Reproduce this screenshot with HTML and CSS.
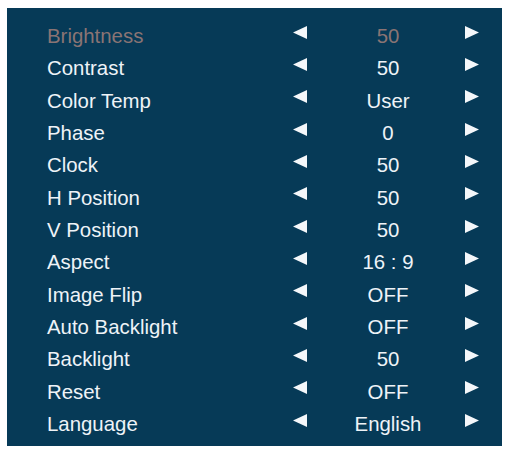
FILE: index.html
```html
<!DOCTYPE html>
<html>
<head>
<meta charset="utf-8">
<link rel="stylesheet" href="styles.css">
</head>
<body>
<div class="osd">
  <div class="row dim"><span class="label">Brightness</span><svg class="arr" viewBox="0 0 14 13"><polygon points="0,6.5 14,0 14,13"/></svg><span class="value">50</span><svg class="arr" viewBox="0 0 14 13"><polygon points="0,0 14,6.5 0,13"/></svg></div>
  <div class="row"><span class="label">Contrast</span><svg class="arr" viewBox="0 0 14 13"><polygon points="0,6.5 14,0 14,13"/></svg><span class="value">50</span><svg class="arr" viewBox="0 0 14 13"><polygon points="0,0 14,6.5 0,13"/></svg></div>
  <div class="row"><span class="label">Color Temp</span><svg class="arr" viewBox="0 0 14 13"><polygon points="0,6.5 14,0 14,13"/></svg><span class="value">User</span><svg class="arr" viewBox="0 0 14 13"><polygon points="0,0 14,6.5 0,13"/></svg></div>
  <div class="row"><span class="label">Phase</span><svg class="arr" viewBox="0 0 14 13"><polygon points="0,6.5 14,0 14,13"/></svg><span class="value">0</span><svg class="arr" viewBox="0 0 14 13"><polygon points="0,0 14,6.5 0,13"/></svg></div>
  <div class="row"><span class="label">Clock</span><svg class="arr" viewBox="0 0 14 13"><polygon points="0,6.5 14,0 14,13"/></svg><span class="value">50</span><svg class="arr" viewBox="0 0 14 13"><polygon points="0,0 14,6.5 0,13"/></svg></div>
  <div class="row"><span class="label">H Position</span><svg class="arr" viewBox="0 0 14 13"><polygon points="0,6.5 14,0 14,13"/></svg><span class="value">50</span><svg class="arr" viewBox="0 0 14 13"><polygon points="0,0 14,6.5 0,13"/></svg></div>
  <div class="row"><span class="label">V Position</span><svg class="arr" viewBox="0 0 14 13"><polygon points="0,6.5 14,0 14,13"/></svg><span class="value">50</span><svg class="arr" viewBox="0 0 14 13"><polygon points="0,0 14,6.5 0,13"/></svg></div>
  <div class="row"><span class="label">Aspect</span><svg class="arr" viewBox="0 0 14 13"><polygon points="0,6.5 14,0 14,13"/></svg><span class="value">16 : 9</span><svg class="arr" viewBox="0 0 14 13"><polygon points="0,0 14,6.5 0,13"/></svg></div>
  <div class="row"><span class="label">Image Flip</span><svg class="arr" viewBox="0 0 14 13"><polygon points="0,6.5 14,0 14,13"/></svg><span class="value">OFF</span><svg class="arr" viewBox="0 0 14 13"><polygon points="0,0 14,6.5 0,13"/></svg></div>
  <div class="row"><span class="label">Auto Backlight</span><svg class="arr" viewBox="0 0 14 13"><polygon points="0,6.5 14,0 14,13"/></svg><span class="value">OFF</span><svg class="arr" viewBox="0 0 14 13"><polygon points="0,0 14,6.5 0,13"/></svg></div>
  <div class="row"><span class="label">Backlight</span><svg class="arr" viewBox="0 0 14 13"><polygon points="0,6.5 14,0 14,13"/></svg><span class="value">50</span><svg class="arr" viewBox="0 0 14 13"><polygon points="0,0 14,6.5 0,13"/></svg></div>
  <div class="row"><span class="label">Reset</span><svg class="arr" viewBox="0 0 14 13"><polygon points="0,6.5 14,0 14,13"/></svg><span class="value">OFF</span><svg class="arr" viewBox="0 0 14 13"><polygon points="0,0 14,6.5 0,13"/></svg></div>
  <div class="row"><span class="label">Language</span><svg class="arr" viewBox="0 0 14 13"><polygon points="0,6.5 14,0 14,13"/></svg><span class="value">English</span><svg class="arr" viewBox="0 0 14 13"><polygon points="0,0 14,6.5 0,13"/></svg></div>
</div>
</body>
</html>
```

FILE: styles.css
```css
html, body {
  background: #ffffff;
}
body {
  margin: 8px 7px 9px 7px;
}
.osd {
  width: 495px;
  height: 438px;
  box-sizing: border-box;
  background: #063a57;
  padding: 12px 23px 6px 40px;
  font-family: "Liberation Sans", Arial, sans-serif;
  font-size: 20.4px;
  color: #eef3f7;
}
.row {
  display: grid;
  grid-template-columns: 246px 14px 1fr 14px;
  align-items: center;
  height: 32.33px;
  line-height: 32.33px;
}
.row.dim {
  color: #8a7474;
}
.label {
  white-space: nowrap;
}
.value {
  text-align: center;
  padding-left: 4px;
}
.arr {
  width: 14px;
  height: 13px;
  fill: #f4f7fa;
  margin-top: -8px;
}
```
